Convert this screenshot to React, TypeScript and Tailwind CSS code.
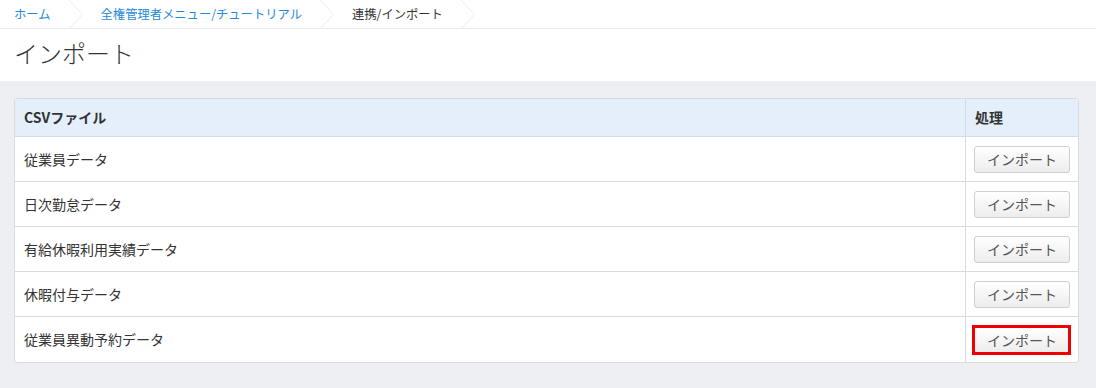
import React from 'react';

const crumbs = [
  { label: 'ホーム', link: true },
  { label: '全権管理者メニュー/チュートリアル', link: true },
  { label: '連携/インポート', link: false },
];

const rows = [
  '従業員データ',
  '日次勤怠データ',
  '有給休暇利用実績データ',
  '休暇付与データ',
  '従業員異動予約データ',
];

const Chevron: React.FC = () => (
  <svg width="16" height="29" viewBox="0 0 16 29" className="shrink-0">
    <polyline points="1,0 14.5,14.5 1,29" fill="none" stroke="#ececec" strokeWidth="1" />
  </svg>
);

const ImportButton: React.FC<{ marked?: boolean }> = ({ marked }) => (
  <div className="relative w-[96px]">
    <button className="w-full h-[27px] rounded-[3px] border border-[#cfcfcf] bg-gradient-to-b from-white to-[#ededed] text-[14px] text-[#555] leading-none">
      インポート
    </button>
    {marked && (
      <div className="absolute left-[-2px] right-[-1px] top-[-1px] bottom-[-2px] border-[3px] border-[#f00000]" />
    )}
  </div>
);

export default function App() {
  return (
    <div
      className="w-[1096px] h-[388px] bg-[#eeeff3] text-[#333]"
      style={{ fontFamily: '"Noto Sans CJK JP", "Noto Sans", sans-serif' }}
    >
      <div className="bg-white">
        <nav className="h-[29px] flex items-center border-b border-[#ececec] text-[12.3px]">
          {crumbs.map((c, i) => (
            <div key={i} className="flex items-center h-full">
              <span className={`${i === 0 ? 'pl-[14px]' : 'pl-[17px]'} pr-[17px] ${c.link ? 'text-[#1f8ad8]' : 'text-[#333]'}`}>
                {c.label}
              </span>
              <Chevron />
            </div>
          ))}
        </nav>
        <h1 className="h-[52px] flex items-center pb-[4px] pl-[14px] text-[24px] font-light text-[#333]">インポート</h1>
      </div>

      <div className="pt-[17px] pl-[14px] pr-[17px]">
        <div className="bg-white border border-[#d8dadd] rounded-[3px] overflow-hidden">
          <div className="flex h-[38px] bg-[#e5effb] border-b border-[#d8dadd] text-[14px] font-bold">
            <div className="flex-1 flex items-center pl-[9px]">CSVファイル</div>
            <div className="w-[113px] flex items-center pl-[9px] border-l border-[#d8dadd]">処理</div>
          </div>
          {rows.map((r, i) => (
            <div
              key={r}
              className={`flex h-[45px] text-[14px] ${i < rows.length - 1 ? 'border-b border-[#d8dadd]' : ''}`}
            >
              <div className="flex-1 flex items-center pl-[9px]">{r}</div>
              <div className="w-[113px] flex items-center pl-[8px] border-l border-[#d8dadd]">
                <ImportButton marked={i === rows.length - 1} />
              </div>
            </div>
          ))}
        </div>
      </div>
    </div>
  );
}
